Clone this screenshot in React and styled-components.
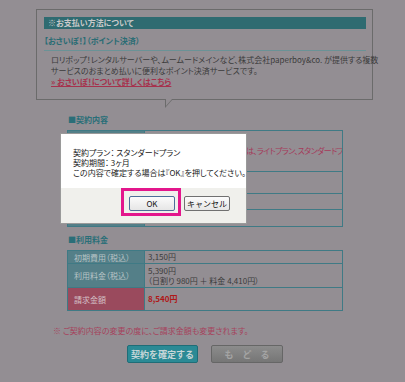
import React from 'react';
import styled, { createGlobalStyle } from 'styled-components';

const GlobalStyle = createGlobalStyle`
  html, body {
    margin: 0;
    padding: 0;
    background: #938e93;
  }
  body {
    font-family: "Noto Sans CJK JP", "Noto Sans", sans-serif;
    font-size: 8px;
    color: #3b3b3b;
    font-feature-settings: "palt";
  }
`;

const Page = styled.div`
  position: relative;
  width: 405px;
  height: 382px;
  overflow: hidden;
  box-sizing: border-box;
  padding-top: 9px;
`;

const Bubble = styled.div`
  position: relative;
  margin-left: 36px;
  width: 337px;
  height: 91px;
  box-sizing: border-box;
  border: 1px solid #6b6b6b;
  padding: 7px 6px 0 7px;

  &::before,
  &::after {
    content: '';
    position: absolute;
    width: 0;
    height: 0;
    border-style: solid;
  }
  &::before {
    left: 128px;
    bottom: -9px;
    border-width: 9px 8px 0 0;
    border-color: #6b6b6b transparent transparent transparent;
  }
  &::after {
    left: 129px;
    bottom: -7px;
    border-width: 7px 6px 0 0;
    border-color: #938e93 transparent transparent transparent;
  }
`;

const HeadBar = styled.div`
  height: 12px;
  line-height: 12px;
  background: #2f6b71;
  color: #c9c9c9;
  font-weight: bold;
  font-size: 8px;
  padding-left: 4px;
`;

const SubTitle = styled.div`
  margin-top: 6px;
  color: #2a6c74;
  font-weight: bold;
  font-size: 8px;
  line-height: 12px;
  padding-bottom: 3px;
  border-bottom: 1px solid #6a9296;
`;

const BodyText = styled.p`
  margin: 3px 0 0 7px;
  line-height: 11px;
  font-size: 8px;
  color: #3b3b3b;
  white-space: nowrap;
`;

const MoreLink = styled.a`
  display: inline-block;
  color: #a6324d;
  text-decoration: underline;
  font-size: 8px;
  font-weight: bold;
  line-height: 10px;
  margin-left: 7px;
`;

const Section = styled.section`
  margin-left: 67px;
  width: 276px;
  margin-top: ${({ $top }) => $top}px;
`;

const SectionTitle = styled.div`
  color: #2a6e78;
  font-weight: bold;
  font-size: 8px;
  line-height: 10px;
  margin-bottom: 5px;
  padding-left: 1px;
`;

const Table = styled.table`
  width: 100%;
  table-layout: fixed;
  border-collapse: collapse;
  border: 1px solid #3f7a85;
`;

const LabelCol = styled.col`
  width: 77px;
`;

const Th = styled.th`
  height: ${({ $h }) => $h}px;
  box-sizing: border-box;
  padding: 0 0 0 6px;
  text-align: left;
  font-weight: normal;
  font-size: 8px;
  color: ${({ $red }) => ($red ? '#d3c0c6' : '#b7c4c6')};
  background: ${({ $red }) => ($red ? '#9a4a5d' : '#547f88')};
  border: 1px solid #3f7a85;
  white-space: nowrap;
`;

const Td = styled.td`
  padding: 0 0 0 ${({ $indent }) => $indent || 3}px;
  font-size: 8px;
  line-height: 10px;
  letter-spacing: ${({ $tone }) => ($tone === 'notice' ? '-0.6px' : '0')};
  color: ${({ $tone }) => ($tone === 'amount' ? '#b01818' : $tone === 'notice' ? '#a53a5a' : '#3b3b3b')};
  font-weight: ${({ $tone }) => ($tone === 'amount' ? 'bold' : 'normal')};
  border: 1px solid #3f7a85;
  white-space: nowrap;
  overflow: hidden;
`;

const Notice = styled.p`
  margin: 15px 0 0 53px;
  color: #a6425c;
  font-size: 8px;
  line-height: 10px;
  white-space: nowrap;
`;

const Actions = styled.div`
  display: flex;
  gap: 13px;
  margin: 9px 0 0 127px;
`;

const ActionButton = styled.button`
  width: ${({ $w }) => $w}px;
  height: 18px;
  padding: 0;
  box-sizing: border-box;
  font-family: inherit;
  font-size: 9px;
  font-weight: bold;
  white-space: nowrap;
  letter-spacing: ${({ $back }) => ($back ? '9px' : '0')};
  text-indent: ${({ $back }) => ($back ? '9px' : '0')};
  border-radius: 2px;
  color: ${({ $back }) => ($back ? '#a4a4a4' : '#c6d6d8')};
  background: ${({ $back }) =>
    $back ? 'linear-gradient(#8c8c8c, #767676)' : '#2b8a95'};
  border: 1px solid ${({ $back }) => ($back ? '#666' : '#1f6d77')};
`;

const Dialog = styled.div`
  position: absolute;
  left: 60px;
  top: 133px;
  width: 187px;
  height: 91px;
  box-sizing: border-box;
  border: 1px solid #9a9a9a;
  background: #fff;
  display: flex;
  flex-direction: column;
`;

const DialogBody = styled.div`
  flex: 1;
  padding: 14px 0 0 12px;
  font-size: 8px;
  line-height: 10px;
  color: #222;
  white-space: nowrap;
`;

const DialogFooter = styled.div`
  height: 35px;
  background: #f0f0ec;
  display: flex;
  justify-content: flex-end;
  align-items: flex-start;
  gap: 9px;
  padding: 8px 16px 0 0;
  box-sizing: border-box;
`;

const DialogButton = styled.button`
  position: relative;
  width: 46px;
  height: 15px;
  padding: 0;
  font-family: inherit;
  font-size: 8px;
  color: #111;
  background: linear-gradient(#fbfbfb, #e6e6e6);
  border: 1px solid ${({ $primary }) => ($primary ? '#4d6e9a' : '#707070')};
  border-radius: 2px;

  ${({ $primary }) =>
    $primary &&
    `
    &::after {
      content: '';
      position: absolute;
      left: -9px;
      top: -9px;
      right: -7px;
      bottom: -6px;
      border: 3px solid #e3168c;
    }
  `}
`;

export default function App() {
  return (
    <Page>
      <GlobalStyle />
      <Bubble>
        <HeadBar>※お支払い方法について</HeadBar>
        <SubTitle>【おさいぽ！】（ポイント決済）</SubTitle>
        <BodyText>
          ロリポップ！レンタルサーバーや、ムームードメインなど、株式会社paperboy&amp;co. が提供する複数
          <br />
          サービスのおまとめ払いに便利なポイント決済サービスです。
        </BodyText>
        <MoreLink href="#">» おさいぽ！について詳しくはこちら</MoreLink>
      </Bubble>

      <Section $top={15}>
        <SectionTitle>■契約内容</SectionTitle>
        <Table>
          <colgroup>
            <LabelCol />
            <col />
          </colgroup>
          <tbody>
            <tr>
              <Th $h={41} />
              <Td $tone="notice" $indent={101}>は、ライトプラン、スタンダードプ</Td>
            </tr>
            <tr>
              <Th $h={22} />
              <Td />
            </tr>
            <tr>
              <Th $h={16} />
              <Td />
            </tr>
            <tr>
              <Th $h={17} />
              <Td />
            </tr>
          </tbody>
        </Table>
      </Section>

      <Section $top={8}>
        <SectionTitle>■利用料金</SectionTitle>
        <Table>
          <colgroup>
            <LabelCol />
            <col />
          </colgroup>
          <tbody>
            <tr>
              <Th $h={13}>初期費用（税込）</Th>
              <Td>3,150円</Td>
            </tr>
            <tr>
              <Th $h={24}>利用料金（税込）</Th>
              <Td>
                5,390円
                <br />
                （日割り 980円 ＋ 料金 4,410円）
              </Td>
            </tr>
            <tr>
              <Th $h={23} $red>請求金額</Th>
              <Td $tone="amount">8,540円</Td>
            </tr>
          </tbody>
        </Table>
      </Section>

      <Notice>※ ご契約内容の変更の度に、ご請求金額も変更されます。</Notice>

      <Actions>
        <ActionButton $w={71}>契約を確定する</ActionButton>
        <ActionButton $w={72} $back>もどる</ActionButton>
      </Actions>

      <Dialog>
        <DialogBody>
          契約プラン： スタンダードプラン
          <br />
          契約期間： 3ヶ月
          <br />
          この内容で確定する場合は『OK』を押してください。
        </DialogBody>
        <DialogFooter>
          <DialogButton $primary>OK</DialogButton>
          <DialogButton>キャンセル</DialogButton>
        </DialogFooter>
      </Dialog>
    </Page>
  );
}
